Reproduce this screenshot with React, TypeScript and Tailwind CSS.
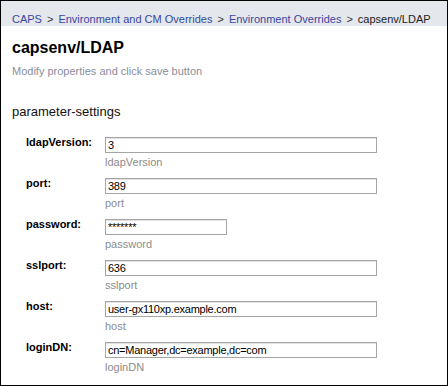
import React from "react";

const font = { fontFamily: '"Liberation Sans", Arial, sans-serif' };

const rows: { label: string; value: string; narrow?: boolean }[] = [
  { label: "ldapVersion:", value: "3" },
  { label: "port:", value: "389" },
  { label: "password:", value: "*******", narrow: true },
  { label: "sslport:", value: "636" },
  { label: "host:", value: "user-gx110xp.example.com" },
  { label: "loginDN:", value: "cn=Manager,dc=example,dc=com" },
];

function Sep() {
  return <span className="px-[5px] text-[#333]">&gt;</span>;
}

export default function App() {
  return (
    <div
      className="w-[448px] h-[386px] border border-black bg-white overflow-hidden"
      style={font}
    >
      <div className="h-[25px] bg-[#e4e7eb] pl-[11px] pt-[12px] text-[11px] leading-[13px] whitespace-nowrap">
        <span className="text-[#3848a0]">CAPS</span>
        <Sep />
        <span className="text-[#3848a0]">Environment and CM Overrides</span>
        <Sep />
        <span className="text-[#3848a0]">Environment Overrides</span>
        <Sep />
        <span className="text-[#222]">capsenv/LDAP</span>
      </div>
      <div className="pl-[11px]">
        <div className="mt-[12px] text-[16px] leading-[19px] font-bold text-black">
          capsenv/LDAP
        </div>
        <div className="mt-[8px] text-[11px] leading-[13px] text-[#8a8e9c]">
          Modify properties and click save button
        </div>
        <div className="mt-[26px] text-[13px] leading-[15px] text-[#111]">
          parameter-settings
        </div>
      </div>
      <div className="mt-[18px] pl-[25px] flex flex-col">
        {rows.map((r) => (
          <div key={r.label} className="flex h-[41px]">
            <div className="w-[79px] -mt-[1px] text-[11px] leading-[13px] font-bold text-black">
              {r.label}
            </div>
            <div className="flex flex-col">
              <input
                readOnly
                value={r.value}
                className={`${
                  r.narrow ? "w-[122px]" : "w-[272px]"
                } h-[16px] border border-[#a5a5a5] shadow-[inset_0_1px_0_#e2e2e2] px-[2px] text-[11px] leading-[14px] tracking-[-0.25px] text-black outline-none bg-white`}
                style={font}
              />
              <div className="mt-[3px] text-[11px] leading-[13px] text-[#8c8c8c]">
                {r.label.replace(":", "")}
              </div>
            </div>
          </div>
        ))}
      </div>
    </div>
  );
}
